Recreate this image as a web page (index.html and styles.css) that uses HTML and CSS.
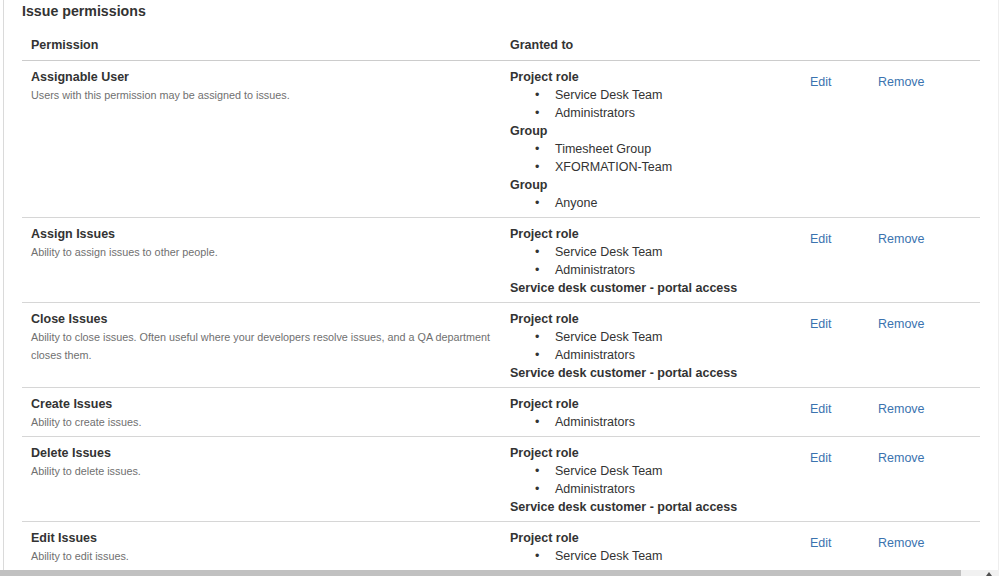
FILE: index.html
```html
<!DOCTYPE html>
<html lang="en">
<head>
<meta charset="utf-8">
<title>Issue permissions</title>
<link rel="stylesheet" href="styles.css">
</head>
<body>
<div class="frame">
  <div class="content">
    <h2 class="title">Issue permissions</h2>
    <table class="perms">
      <colgroup>
        <col class="c-perm"><col class="c-grant"><col class="c-edit"><col class="c-remove">
      </colgroup>
      <thead>
        <tr><th>Permission</th><th>Granted to</th><th></th><th></th></tr>
      </thead>
      <tbody>
        <tr>
          <td><div class="name">Assignable User</div><div class="desc">Users with this permission may be assigned to issues.</div></td>
          <td>
            <div class="type">Project role</div>
            <ul><li>Service Desk Team</li><li>Administrators</li></ul>
            <div class="type">Group</div>
            <ul><li>Timesheet Group</li><li>XFORMATION-Team</li></ul>
            <div class="type">Group</div>
            <ul><li>Anyone</li></ul>
          </td>
          <td class="act"><a href="#">Edit</a></td>
          <td class="act"><a href="#">Remove</a></td>
        </tr>
        <tr>
          <td><div class="name">Assign Issues</div><div class="desc">Ability to assign issues to other people.</div></td>
          <td>
            <div class="type">Project role</div>
            <ul><li>Service Desk Team</li><li>Administrators</li></ul>
            <div class="type">Service desk customer - portal access</div>
          </td>
          <td class="act"><a href="#">Edit</a></td>
          <td class="act"><a href="#">Remove</a></td>
        </tr>
        <tr>
          <td><div class="name">Close Issues</div><div class="desc">Ability to close issues. Often useful where your developers resolve issues, and a QA department closes them.</div></td>
          <td>
            <div class="type">Project role</div>
            <ul><li>Service Desk Team</li><li>Administrators</li></ul>
            <div class="type">Service desk customer - portal access</div>
          </td>
          <td class="act"><a href="#">Edit</a></td>
          <td class="act"><a href="#">Remove</a></td>
        </tr>
        <tr>
          <td><div class="name">Create Issues</div><div class="desc">Ability to create issues.</div></td>
          <td>
            <div class="type">Project role</div>
            <ul><li>Administrators</li></ul>
          </td>
          <td class="act"><a href="#">Edit</a></td>
          <td class="act"><a href="#">Remove</a></td>
        </tr>
        <tr>
          <td><div class="name">Delete Issues</div><div class="desc">Ability to delete issues.</div></td>
          <td>
            <div class="type">Project role</div>
            <ul><li>Service Desk Team</li><li>Administrators</li></ul>
            <div class="type">Service desk customer - portal access</div>
          </td>
          <td class="act"><a href="#">Edit</a></td>
          <td class="act"><a href="#">Remove</a></td>
        </tr>
        <tr>
          <td><div class="name">Edit Issues</div><div class="desc">Ability to edit issues.</div></td>
          <td>
            <div class="type">Project role</div>
            <ul><li>Service Desk Team</li></ul>
          </td>
          <td class="act"><a href="#">Edit</a></td>
          <td class="act"><a href="#">Remove</a></td>
        </tr>
      </tbody>
    </table>
  </div>
  <div class="hscroll">
    <div class="thumb"></div>
    <div class="track"><span class="arrow"></span></div>
  </div>
</div>
</body>
</html>
```

FILE: styles.css
```css
html, body {
  margin: 0;
  padding: 0;
  background: #ffffff;
}
body {
  width: 999px;
  height: 576px;
  overflow: hidden;
  font-family: "Liberation Sans", Arial, sans-serif;
  color: #333333;
}
.frame {
  display: flex;
  flex-direction: column;
  height: 576px;
}
.content {
  flex: 1;
  min-height: 0;
  overflow: hidden;
  margin-left: 3px;
  border-left: 1px solid #dadada;
  border-right: 1px solid #eeeeee;
  padding-left: 18px;
}
.title {
  margin: 0;
  padding-top: 2px;
  font-size: 14.2px;
  line-height: 18px;
  font-weight: bold;
  color: #333333;
}
.perms {
  margin-top: 9px;
  width: 958px;
  border-collapse: collapse;
  table-layout: fixed;
  font-size: 12.5px;
  line-height: 18px;
}
.c-perm { width: 479px; }
.c-grant { width: 300px; }
.c-edit { width: 68px; }
.c-remove { width: 111px; }
.perms th {
  text-align: left;
  font-weight: bold;
  padding: 7px 9px 6px;
  border-bottom: 1px solid #cccccc;
}
.perms td {
  vertical-align: top;
  padding: 7px 9px 5px;
  border-bottom: 1px solid #d6d6d6;
}
.perms td.act {
  padding-top: 12px;
}
.name {
  font-weight: bold;
}
.desc {
  font-size: 10.8px;
  color: #707070;
  line-height: 18px;
}
.type {
  font-weight: bold;
}
.perms ul {
  margin: 0;
  padding-left: 45px;
  list-style: none;
}
.perms li {
  line-height: 18px;
}
.perms li::before {
  content: "\2022";
  display: inline-block;
  width: 20px;
  margin-left: -20px;
}
.act a {
  color: #3b73af;
  text-decoration: none;
}
.hscroll {
  height: 6px;
  display: flex;
}
.thumb {
  width: 961px;
  background: #c1c1c1;
}
.track {
  flex: 1;
  background: #f1f1f1;
  position: relative;
}
.arrow {
  position: absolute;
  left: 25px;
  top: 2px;
  width: 0;
  height: 0;
  border-left: 3px solid transparent;
  border-right: 3px solid transparent;
  border-bottom: 4px solid #505050;
}
```
